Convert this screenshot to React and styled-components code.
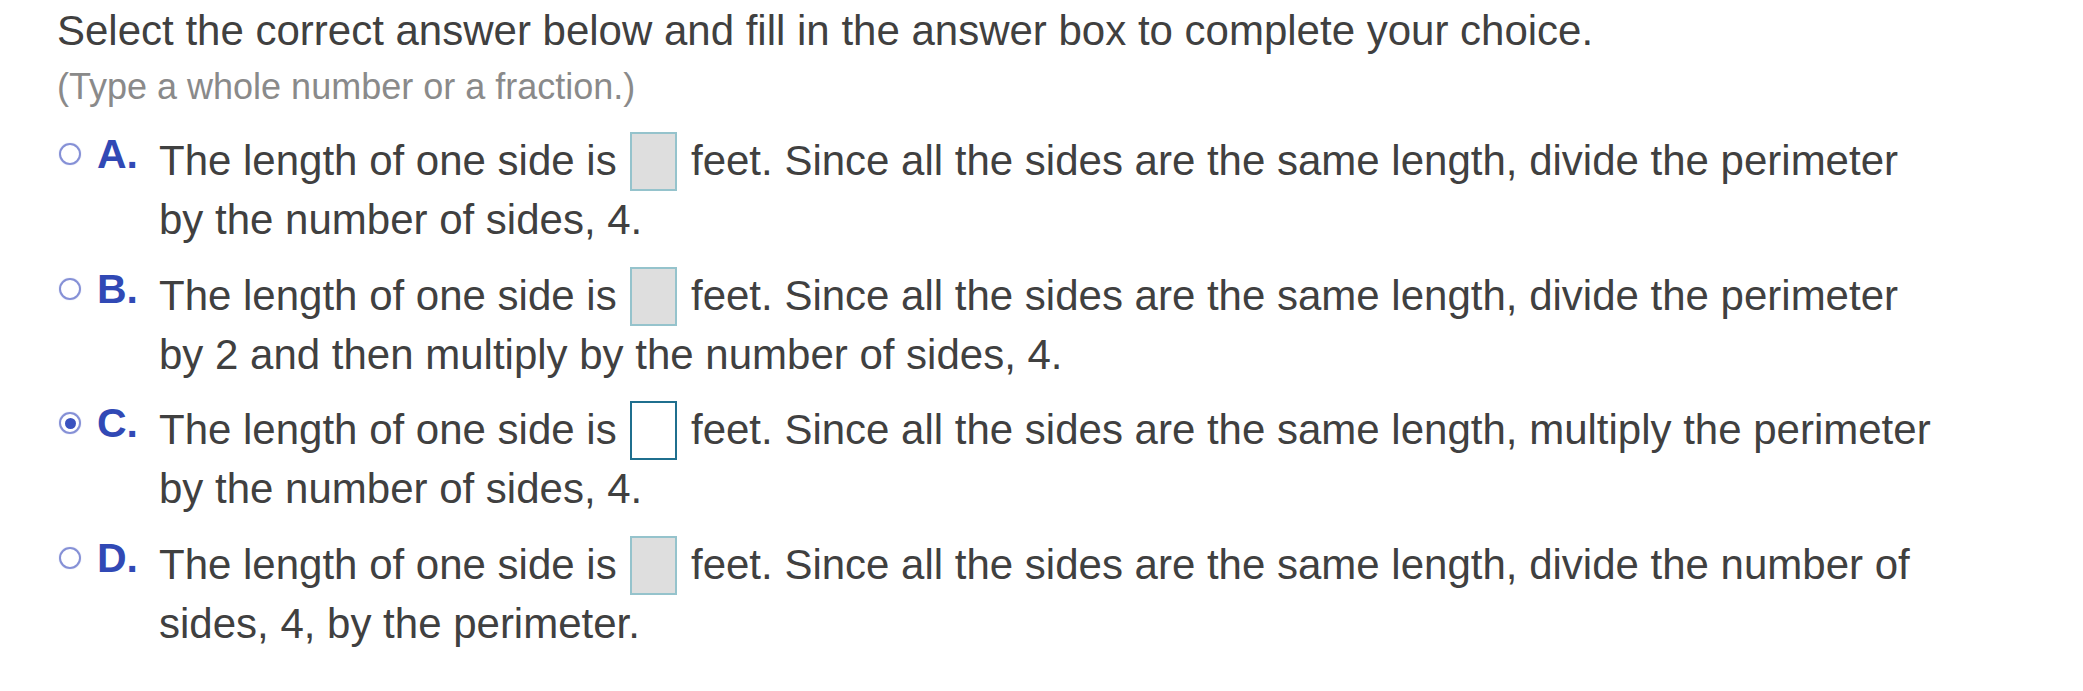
import styled, { createGlobalStyle } from "styled-components"

const GlobalStyle = createGlobalStyle`
    body {
        margin: 0;
        background: #ffffff;
        font-family: "Liberation Sans", Arial, sans-serif;
    }
`

const Page = styled.div`
    padding: 4px 0 0 57px;
`
const Title = styled.div`
    font-size: 42px;
    line-height: 54px;
    color: #404040;
`
const Hint = styled.div`
    font-size: 36px;
    line-height: 54px;
    color: #8a8a8a;
    margin-top: 2px;
`
const Choices = styled.div`
    display: flex;
    flex-direction: column;
    gap: 18px;
    margin-top: 18px;
    padding-left: 2px;
`
const Row = styled.div`
    display: flex;
    align-items: flex-start;
`
const Radio = styled.span`
    flex: none;
    width: 22px;
    height: 22px;
    box-sizing: border-box;
    border-radius: 50%;
    border: 2px solid #8590d6;
    box-shadow: 0 0 1px #aab2e4;
    margin-top: 11px;
    display: grid;
    place-items: center;
    &::after {
        content: "";
        width: 11px;
        height: 11px;
        border-radius: 50%;
        background: ${p => (p.$checked ? "#3a52bf" : "transparent")};
    }
`
const Letter = styled.span`
    flex: none;
    width: 62px;
    margin-left: 16px;
    margin-top: -6px;
    font-size: 41px;
    line-height: 57.5px;
    font-weight: bold;
    color: #3149b5;
`
const Text = styled.div`
    width: 1780px;
    font-size: 42px;
    line-height: 57.5px;
    color: #404040;
`
const AnswerBox = styled.span`
    display: inline-block;
    width: 47px;
    height: 59px;
    box-sizing: border-box;
    margin: 0 2px;
    vertical-align: -16px;
    border: 2px solid ${p => (p.$active ? "#1f6f8e" : "#95c3cc")};
    background: ${p => (p.$active ? "#ffffff" : "#dedede")};
`

const choices = [
    { key: "A", rest: "feet. Since all the sides are the same length, divide the perimeter by the number of sides, 4." },
    { key: "B", rest: "feet. Since all the sides are the same length, divide the perimeter by 2 and then multiply by the number of sides, 4." },
    { key: "C", rest: "feet. Since all the sides are the same length, multiply the perimeter by the number of sides, 4.", checked: true },
    { key: "D", rest: "feet. Since all the sides are the same length, divide the number of sides, 4, by the perimeter." },
]

const App = () => {
    return (
        <Page>
            <GlobalStyle/>
            <Title>Select the correct answer below and fill in the answer box to complete your choice.</Title>
            <Hint>(Type a whole number or a fraction.)</Hint>
            <Choices>
                {choices.map(c => (
                    <Row key={c.key}>
                        <Radio $checked={c.checked}/>
                        <Letter>{c.key}.</Letter>
                        <Text>
                            The length of one side is{" "}
                            <AnswerBox $active={c.checked}/>
                            {" "}{c.rest}
                        </Text>
                    </Row>
                ))}
            </Choices>
        </Page>
    )
}

export default App
